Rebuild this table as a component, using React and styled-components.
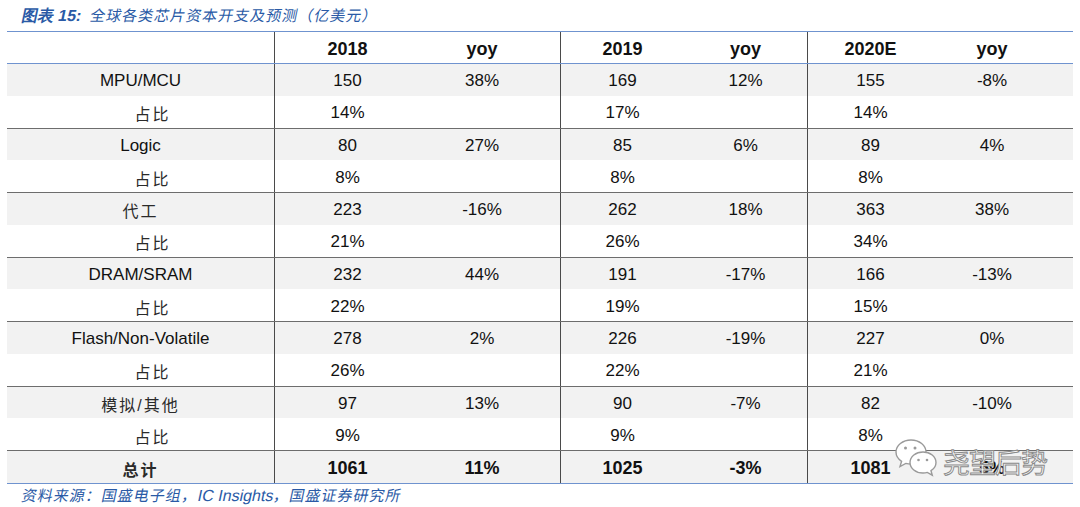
import React from "react";
import styled, { createGlobalStyle } from "styled-components";

const GlobalStyle = createGlobalStyle`
  html, body {
    margin: 0;
    padding: 0;
    background: #ffffff;
  }
  body {
    font-family: "Liberation Sans", "Noto Sans CJK SC", sans-serif;
    color: #111;
  }
`;

const BLUE_LINE = "#6f93cf";

const Page = styled.div`
  position: relative;
  width: 1080px;
  height: 507px;
  overflow: hidden;
`;

const Caption = styled.div`
  height: 31px;
  padding-left: 22px;
  display: flex;
  align-items: center;
`;

// CJK fonts have no italic face, so slant the note text by hand
const Slanted = styled.span`
  display: inline-block;
  transform: skewX(-12deg);
  font-family: "Noto Sans CJK SC", sans-serif;
  font-size: 15px;
  color: #2a5aa6;
  letter-spacing: 1px;
  white-space: pre;

  b {
    font-family: "Liberation Sans", sans-serif;
    font-weight: 700;
    font-size: 16px;
    letter-spacing: 0;
  }

  i {
    font-style: normal;
    font-family: "Liberation Sans", sans-serif;
    font-size: 16px;
    letter-spacing: 0;
  }
`;

const Table = styled.div`
  margin-left: 7px;
  width: 1066px;
  border-top: 1px solid ${BLUE_LINE};
  border-bottom: 1.5px solid ${BLUE_LINE};
`;

const Row = styled.div`
  display: grid;
  grid-template-columns: 267px 146px 140px 124px 123px 126px 140px;
  height: ${(p) => p.$h}px;
  background: ${(p) => (p.$shade ? "#f2f2f2" : "#ffffff")};
  border-top: ${(p) => (p.$line === "gray" ? "1px solid #6d6d6d" : "none")};
  border-bottom: ${(p) =>
    p.$line === "blue" ? `1px solid ${BLUE_LINE}` : "none"};
`;

const Cell = styled.div`
  display: flex;
  align-items: center;
  justify-content: center;
  box-sizing: border-box;
  padding-top: 3px;
  padding-right: ${(p) => p.$pr || 0}px;
  padding-left: ${(p) => p.$pl || 0}px;
  border-left: ${(p) => (p.$split ? "1px solid #4a4a4a" : "none")};
  font-size: ${(p) => (p.$bold ? 18 : 17)}px;
  font-weight: ${(p) => (p.$bold ? 700 : 400)};
  color: #111;
  white-space: nowrap;
`;

const Label = styled(Cell)`
  font-family: "Liberation Sans", "Noto Sans CJK SC", sans-serif;
  font-size: ${(p) => (p.$cjk ? 16 : 17)}px;
  color: ${(p) => (p.$cjk ? "#2a2a2a" : "#111")};
  letter-spacing: ${(p) => (p.$cjk ? "2px" : "0")};
`;

const Source = styled.div`
  padding: 0 0 0 22px;
  line-height: 22px;
`;

const Watermark = styled.div`
  position: absolute;
  left: 894px;
  top: 437px;
  display: flex;
  align-items: flex-end;
  gap: 3px;
  pointer-events: none;
`;

const MarkText = styled.span`
  font-family: "Noto Sans CJK SC", sans-serif;
  font-size: 27px;
  line-height: 34px;
  letter-spacing: -1px;
  color: #ffffff;
  -webkit-text-stroke: 1px #8a8a8a;
  margin-bottom: 2px;
`;

// column padding to nudge the yoy columns like the source sheet
const PAD = [0, 0, 16, 0, 0, 0, 22];

const groups = [
  { name: "MPU/MCU", v: ["150", "38%", "169", "12%", "155", "-8%"], p: ["14%", "17%", "14%"] },
  { name: "Logic", v: ["80", "27%", "85", "6%", "89", "4%"], p: ["8%", "8%", "8%"] },
  { name: "代工", cjk: true, v: ["223", "-16%", "262", "18%", "363", "38%"], p: ["21%", "26%", "34%"] },
  { name: "DRAM/SRAM", v: ["232", "44%", "191", "-17%", "166", "-13%"], p: ["22%", "19%", "15%"] },
  { name: "Flash/Non-Volatile", v: ["278", "2%", "226", "-19%", "227", "0%"], p: ["26%", "22%", "21%"] },
  { name: "模拟/其他", cjk: true, v: ["97", "13%", "90", "-7%", "82", "-10%"], p: ["9%", "9%", "8%"] },
];

const ValueCells = ({ values, bold }) =>
  values.map((v, i) => (
    <Cell key={i} $split={i % 2 === 0} $pr={PAD[i + 1]} $bold={bold}>
      {v}
    </Cell>
  ));

const WeChatIcon = () => (
  <svg width="46" height="44" viewBox="0 0 46 44">
    <g fill="#ffffff" stroke="#9a9a9a" strokeWidth="1.4">
      <path d="M17 3c-8.3 0-15 5.4-15 12 0 3.8 2.2 7.1 5.6 9.3L6 29.5l5.8-3.1c1.6.4 3.4.6 5.2.6 8.3 0 15-5.4 15-12S25.3 3 17 3z" />
      <path d="M29 15c-7.2 0-13 4.7-13 10.5S21.8 36 29 36c1.5 0 3-.2 4.3-.6l5 2.8-1.3-4.5c3-1.9 5-4.8 5-8.2C42 19.7 36.2 15 29 15z" />
    </g>
    <g fill="#9a9a9a">
      <circle cx="11.5" cy="11" r="1.5" />
      <circle cx="21" cy="11" r="1.5" />
      <circle cx="24.5" cy="23" r="1.3" />
      <circle cx="33" cy="23" r="1.3" />
    </g>
  </svg>
);

export default function App() {
  return (
    <Page>
      <GlobalStyle />
      <Caption>
        <Slanted>
          <b>图表 15:</b>{"  全球各类芯片资本开支及预测（亿美元）"}
        </Slanted>
      </Caption>

      <Table>
        <Row $h={31} $line="blue">
          <Label />
          {["2018", "yoy", "2019", "yoy", "2020E", "yoy"].map((h, i) => (
            <Cell key={i} $split={i % 2 === 0} $pr={PAD[i + 1]} $bold>
              {h}
            </Cell>
          ))}
        </Row>

        {groups.map((g, gi) => (
          <React.Fragment key={g.name}>
            <Row $h={31.75} $shade $line={gi === 0 ? null : "gray"}>
              <Label $cjk={g.cjk}>{g.name}</Label>
              <ValueCells values={g.v} />
            </Row>
            <Row $h={31.75}>
              <Label $cjk $pl={24}>占比</Label>
              <ValueCells values={[g.p[0], "", g.p[1], "", g.p[2], ""]} />
            </Row>
          </React.Fragment>
        ))}

        <Row $h={32} $shade $line="gray">
          <Label $cjk $bold>总计</Label>
          <ValueCells values={["1061", "11%", "1025", "-3%", "1081", "5%"]} bold />
        </Row>
      </Table>

      <Source>
        <Slanted>
          {"资料来源：国盛电子组，"}
          <i>IC Insights</i>
          {"，国盛证券研究所"}
        </Slanted>
      </Source>

      <Watermark>
        <WeChatIcon />
        <MarkText>尧望后势</MarkText>
      </Watermark>
    </Page>
  );
}
